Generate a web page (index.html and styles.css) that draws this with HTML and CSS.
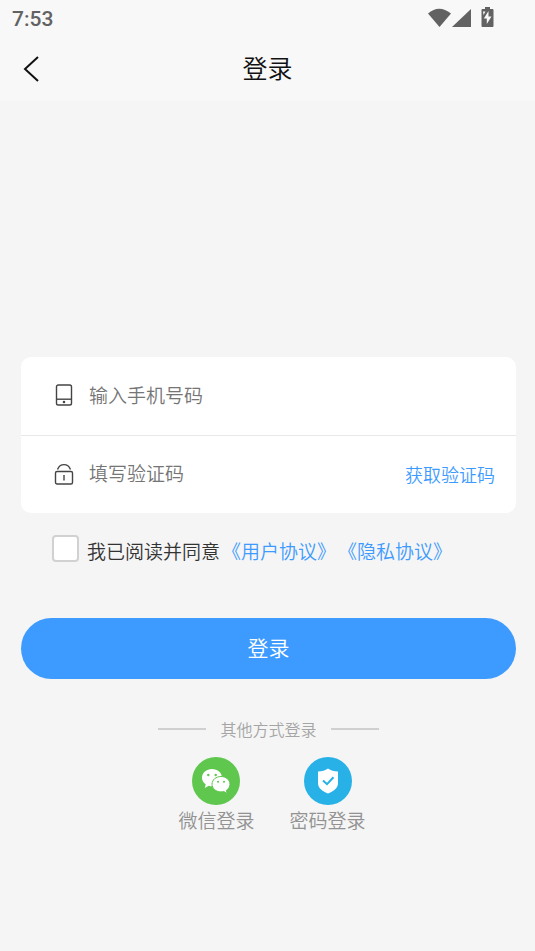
FILE: index.html
```html
<!DOCTYPE html>
<html lang="zh-CN">
<head>
<meta charset="utf-8">
<meta name="viewport" content="width=device-width, initial-scale=1">
<title>登录</title>
<link rel="stylesheet" href="styles.css">
</head>
<body>
<header class="top">
  <div class="status">
    <span class="clock">7:53</span>
    <svg class="status-icons" width="68" height="22" viewBox="0 0 68 22" fill="#626262" aria-hidden="true">
      <path d="M1 6.500Q12 -3 24 6.500L12.500 20Z"/>
      <path d="M25 20L44 2V20Z"/>
      <path d="M58 0h5v2h2.500q1 0 1 1v16q0 1-1 1h-10q-1 0-1-1V3q0-1 1-1H58Z"/>
      <path d="M61.500 4L56.800 11.500h3V17l4.700-7.500h-3Z" fill="#f8f8f8"/>
      <path d="M56 4.500h2.500L56.500 8Z" fill="#f8f8f8"/>
    </svg>
  </div>
  <div class="navbar">
    <button class="back" type="button" aria-label="返回">
      <svg width="18" height="28" viewBox="0 0 18 28" fill="none" stroke="#111" stroke-width="2"><path d="M16 2L3 14L16 26"/></svg>
    </button>
    <h1 class="title">登录</h1>
  </div>
</header>
<main class="content">
  <form class="login">
    <div class="card">
      <div class="field">
        <svg class="field-icon" width="20" height="22" viewBox="0 0 20 22" fill="none" stroke="#444" stroke-width="1.400" aria-hidden="true"><rect x="2.500" y="1" width="15" height="20" rx="1.800"/><path d="M2.500 15.200h15"/><circle cx="10" cy="18" r=".6" fill="#444"/></svg>
        <input class="input" type="tel" aria-label="手机号码" placeholder="输入手机号码">
      </div>
      <div class="field">
        <svg class="field-icon" width="20" height="22" viewBox="0 0 20 22" fill="none" stroke="#444" stroke-width="1.400" aria-hidden="true"><rect x="1.500" y="8.500" width="17" height="12.500" rx="1.500"/><path d="M3.500 6.500C6 0 14 0 16.500 6.500M10 12v5.500"/></svg>
        <input class="input" type="text" aria-label="验证码" placeholder="填写验证码">
        <button class="code" type="button">获取验证码</button>
      </div>
    </div>
    <div class="agree">
      <input class="check" type="checkbox" id="agree">
      <div class="terms"><label for="agree">我已阅读并同意</label><a href="#user">《用户协议》</a><a href="#privacy">《隐私协议》</a></div>
    </div>
    <button class="submit" type="submit">登录</button>
  </form>
  <div class="divider"><span>其他方式登录</span></div>
  <div class="others">
    <a class="other" href="#wechat">
      <svg width="48" height="48" viewBox="0 0 48 48" aria-hidden="true">
        <circle cx="24" cy="24" r="24" fill="#5fc64e"/>
        <path d="M20 12C14.500 12 10 15.800 10 20.700c0 2.800 1.400 5 3.700 6.600L12.800 31l4-2.300q1.600.5 3.200.5C25.600 29.200 30 25.500 30 20.700S25.600 12 20 12Z" fill="#fff"/>
        <path d="M29 19.500c-5 0-9 3.400-9 7.700s4 7.700 9 7.700q1.400 0 2.700-.4l3.500 2-.8-3.200c2.200-1.400 3.600-3.600 3.600-6.100 0-4.300-4-7.700-9-7.700Z" fill="#fff" stroke="#5fc64e"/>
        <g fill="#5fc64e"><circle cx="16.300" cy="18" r="1.200"/><circle cx="23.700" cy="18" r="1.200"/><circle cx="26" cy="24.700" r="1"/><circle cx="32" cy="24.700" r="1"/></g>
      </svg>
      <span>微信登录</span>
    </a>
    <a class="other" href="#password">
      <svg width="48" height="48" viewBox="0 0 48 48" aria-hidden="true">
        <circle cx="24" cy="24" r="24" fill="#27b1e7"/>
        <path d="M24 11.500Q28 14.500 34 14.500V26c0 5.500-5 8.500-10 10.500C19 34.500 14 31.500 14 26V14.500Q20 14.500 24 11.500Z" fill="#fff"/>
        <path d="M19 23.500l4 3.700 6.500-7" fill="none" stroke="#27b1e7" stroke-width="2"/>
      </svg>
      <span>密码登录</span>
    </a>
  </div>
</main>
</body>
</html>
```
FILE: styles.css
```css
* { box-sizing: border-box; }

body {
  margin: 0;
  min-height: 100vh;
  background: #f5f5f5;
  color: #333;
  font-family: "Noto Sans CJK SC", sans-serif;
  font-size: 19px;
  font-weight: 350;
  line-height: 28px;
}

button {
  padding: 0;
  border: 0;
  background: none;
  font: inherit;
  cursor: pointer;
}

a { color: #3d9bff; text-decoration: none; }

.top { background: #f8f8f8; }

.status {
  display: flex;
  align-items: center;
  justify-content: space-between;
  height: 36px;
  padding: 0 40px 0 12px;
}

.clock {
  padding-top: 2px;
  color: #626262;
  font-family: Roboto, sans-serif;
  font-size: 21px;
  font-weight: 500;
}

.navbar {
  display: grid;
  grid-template-columns: 60px 1fr 60px;
  align-items: center;
  height: 65px;
}

.back { display: flex; padding-left: 22px; }

.title {
  margin: 0;
  padding-bottom: 4px;
  color: #111;
  font-size: 25px;
  font-weight: 350;
  line-height: 36px;
  text-align: center;
}

.content { padding: 256px 19px 40px 21px; }

.card {
  border-radius: 10px;
  background: #fff;
}

.field {
  display: flex;
  align-items: center;
  height: 78px;
  padding: 0 21px 2px 33px;
}

.field + .field { border-top: 1px solid #e8e8e8; }

.field-icon { flex: none; margin-right: 15px; }

.input {
  flex: 1;
  min-width: 0;
  height: 40px;
  padding: 0 0 2px;
  border: 0;
  outline: 0;
  background: none;
  color: #333;
  font: inherit;
}

.input::placeholder { color: #757575; opacity: 1; }

.code { color: #3d9bff; font-size: 18px; }

.agree {
  display: flex;
  gap: 8px;
  padding: 22px 0 0 31px;
}

.check {
  appearance: none;
  flex: none;
  width: 27px;
  height: 27px;
  margin: 0;
  border: 2px solid #d1d1d1;
  border-radius: 4px;
  background: #fff;
}

.check:checked { background: #3d9bff; }

.terms {
  display: flex;
  flex-wrap: wrap;
  gap: 2px;
  padding-top: 2px;
}

.submit {
  display: block;
  width: 100%;
  height: 61px;
  margin-top: 53px;
  padding-bottom: 4px;
  border-radius: 31px;
  background: #3d9bff;
  color: #fff;
  font-size: 21px;
}

.divider {
  display: flex;
  align-items: center;
  justify-content: center;
  gap: 14px;
  margin-top: 36px;
  color: #a5a5a5;
  font-size: 16px;
}

.divider::before,
.divider::after {
  content: "";
  width: 48px;
  height: 2px;
  background: #d0d0d0;
}

.others {
  display: flex;
  justify-content: center;
  gap: 35px;
  margin-top: 14px;
  padding-left: 7px;
}

.other {
  display: flex;
  flex-direction: column;
  align-items: center;
  gap: 1px;
  color: #929292;
}
```
